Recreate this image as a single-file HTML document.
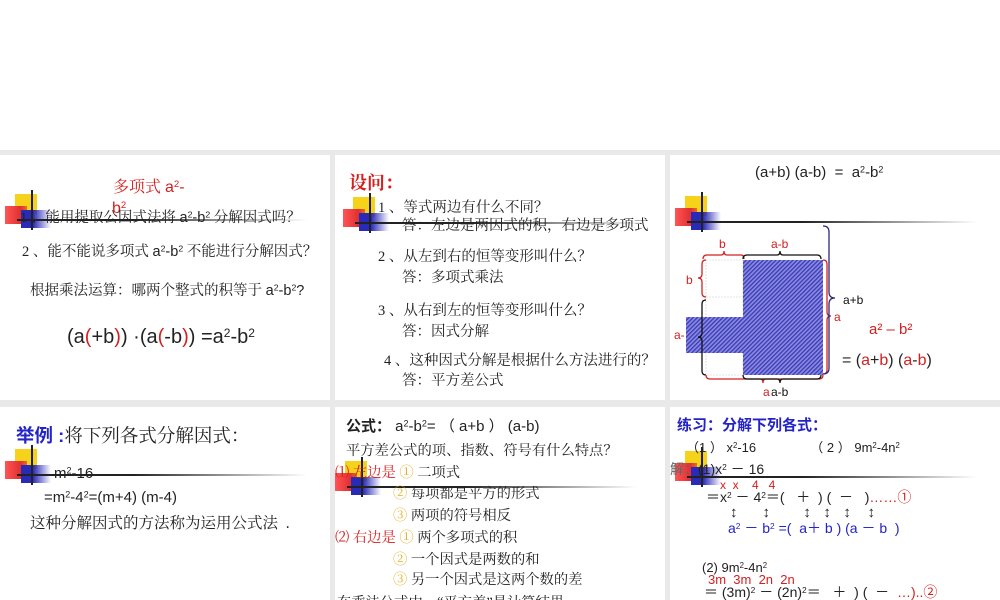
<!DOCTYPE html>
<html><head><meta charset="utf-8"><style>
*{margin:0;padding:0;box-sizing:border-box}
body{width:1000px;height:600px;background:#e9e9e9;position:relative;overflow:hidden;font-family:"Liberation Sans","Noto Sans CJK SC",sans-serif;color:#222}
.top{position:absolute;left:0;top:0;width:1000px;height:150px;background:#fff}
.s{position:absolute;background:#fff;overflow:hidden}
.t{position:absolute;white-space:nowrap;line-height:1}
.cn{font-family:"Liberation Serif","Noto Serif CJK SC",serif}
.r{color:#d42020}.b{color:#2323c8}
sup{font-size:60%;vertical-align:0.5em;line-height:0}
.logo{position:absolute;width:300px;height:40px}
.logo .y{position:absolute;left:10px;top:4px;width:22px;height:20px;background:#f7d21a}
.logo .rd{position:absolute;left:0;top:16px;width:22px;height:18px;background:linear-gradient(90deg,#f55 0%,#e03030 70%,rgba(220,40,40,.6))}
.logo .bl{position:absolute;left:16px;top:20px;width:30px;height:18px;background:linear-gradient(90deg,#2a2ab8 40%,rgba(60,60,200,0))}
.logo .v{position:absolute;left:26px;top:0;width:1.5px;height:40px;background:#222}
.logo .h{position:absolute;left:12px;top:29px;width:290px;height:1.5px;background:linear-gradient(90deg,#222 40%,rgba(0,0,0,0))}
</style></head><body>
<div class="top"></div>

<!-- slide 1 -->
<div class="s" style="left:0;top:155px;width:330px;height:245px">
  <div class="logo" style="left:5px;top:35px"><div class="y"></div><div class="rd"></div><div class="bl"></div><div class="v"></div><div class="h"></div></div>
  <div class="t cn r" style="left:113px;top:25px;font-size:16px">多项式 <span style="font-family:'Liberation Sans'">a<sup>2</sup>-</span></div>
  <div class="t r" style="left:112px;top:46px;font-size:16px">b<sup>2</sup></div>
  <div class="t cn" style="left:20px;top:56px;font-size:14.5px">1 、能用提取公因式法将 <span style="font-family:'Liberation Sans'">a<sup>2</sup>-b<sup>2</sup></span> 分解因式吗？</div>
  <div class="t cn" style="left:22px;top:90px;font-size:14.5px">2 、能不能说多项式 <span style="font-family:'Liberation Sans'">a<sup>2</sup>-b<sup>2</sup></span> 不能进行分解因式？</div>
  <div class="t cn" style="left:30px;top:129px;font-size:14.5px">根据乘法运算：哪两个整式的积等于 <span style="font-family:'Liberation Sans'">a<sup>2</sup>-b<sup>2</sup>?</span></div>
  <div class="t" style="left:67px;top:172px;font-size:20px">(a<span class="r">(</span>+b<span class="r">)</span>) ·(a<span class="r">(</span>-b<span class="r">)</span>) =a<sup>2</sup>-b<sup>2</sup></div>
</div>

<!-- slide 2 -->
<div class="s" style="left:335px;top:155px;width:330px;height:245px">
  <div class="logo" style="left:8px;top:38px"><div class="y"></div><div class="rd"></div><div class="bl"></div><div class="v"></div><div class="h"></div></div>
  <div class="t cn r" style="left:14px;top:19px;font-size:18px;font-weight:bold">设问：</div>
  <div class="t cn" style="left:43px;top:46px;font-size:14.5px">1 、等式两边有什么不同？</div>
  <div class="t cn" style="left:67px;top:64px;font-size:14.5px">答：左边是两因式的积，右边是多项式</div>
  <div class="t cn" style="left:43px;top:95px;font-size:14.5px">2 、从左到右的恒等变形叫什么？</div>
  <div class="t cn" style="left:67px;top:116px;font-size:14.5px">答：多项式乘法</div>
  <div class="t cn" style="left:43px;top:149px;font-size:14.5px">3 、从右到左的恒等变形叫什么？</div>
  <div class="t cn" style="left:67px;top:170px;font-size:14.5px">答：因式分解</div>
  <div class="t cn" style="left:49px;top:199px;font-size:14.5px">4 、这种因式分解是根据什么方法进行的？</div>
  <div class="t cn" style="left:67px;top:219px;font-size:14.5px">答：平方差公式</div>
</div>

<!-- slide 3 -->
<div class="s" style="left:670px;top:155px;width:330px;height:245px">
  <div class="logo" style="left:5px;top:37px"><div class="y"></div><div class="rd"></div><div class="bl"></div><div class="v"></div><div class="h"></div></div>
  <div class="t" style="left:85px;top:10px;font-size:15px">(a+b) (a-b) &nbsp;= &nbsp;a<sup>2</sup>-b<sup>2</sup></div>
</div>
<svg style="position:absolute;left:670px;top:155px" width="330" height="245" viewBox="670 155 330 245">
  <defs><pattern id="hp" width="3" height="3" patternUnits="userSpaceOnUse" patternTransform="rotate(45)"><rect width="3" height="3" fill="#8a8ae0"/><rect width="1.3" height="3" fill="#3a3ab8"/></pattern></defs>
  <rect x="706" y="260" width="37" height="115" fill="none" stroke="#ccc" stroke-width="0.6" stroke-dasharray="2 1"/>
  <line x1="706" y1="297" x2="743" y2="297" stroke="#ccc" stroke-width="0.6" stroke-dasharray="2 1"/>
  <rect x="743" y="260" width="80" height="115" fill="url(#hp)"/>
  <rect x="686" y="317" width="79" height="36" fill="url(#hp)"/>
  <g fill="none" stroke-width="1.3">
    <path d="M703 259 q0-4 4-4 h14 q3 0 3-4 q0 4 3 4 h14 q3 0 3 4" stroke="#d42020"/>
    <path d="M743 259 q0-4 4-4 h30 q3 0 3-4 q0 4 3 4 h34 q4 0 4 4" stroke="#111"/>
    <path d="M706 260 q-4 0-4 4 v10 q0 4-4 4 q4 0 4 4 v11 q0 4 4 4" stroke="#d42020"/>
    <path d="M706 300 q-4 0-4 4 v29 q0 4-4 4 q4 0 4 4 v30 q0 4 4 4" stroke="#111"/>
    <path d="M823 260 q4 0 4 4 v48 q0 4 4 4 q-4 0-4 4 v50 q0 4-4 4" stroke="#d42020"/>
    <path d="M823 226 q6 0 6 6 v60 q0 6 6 6 q-6 0-6 6 v64 q0 6-6 6" stroke="#2a2a7a"/>
    <path d="M706 375 q0 4 4 4 h50 q3 0 3 4 q0-4 3-4 h53 q4 0 4-4" stroke="#d42020"/>
    <path d="M743 375 q0 4 4 4 h30 q3 0 3 4 q0-4 3-4 h34 q4 0 4-4" stroke="#111"/>
  </g>
  <g font-family="Liberation Sans" font-size="12">
    <text x="719" y="248" fill="#d42020">b</text>
    <text x="771" y="248" fill="#d42020">a-b</text>
    <text x="686" y="284" fill="#d42020">b</text>
    <text x="843" y="304" fill="#111">a+b</text>
    <text x="834" y="321" fill="#d42020">a</text>
    <text x="674" y="339" fill="#d42020">a-</text>
    <text x="763" y="396" fill="#d42020">a</text>
    <text x="771" y="396" fill="#111">a-b</text>
  </g>
  <text x="869" y="334" font-family="Liberation Sans" font-size="15" fill="#d42020">a² – b²</text>
  <text x="842" y="365" font-family="Liberation Sans" font-size="16" fill="#222">= (<tspan fill="#d42020">a</tspan>+<tspan fill="#d42020">b</tspan>) (<tspan fill="#d42020">a</tspan>-<tspan fill="#d42020">b</tspan>)</text>
</svg>

<!-- slide 4 -->
<div class="s" style="left:0;top:407px;width:330px;height:193px">
  <div class="logo" style="left:5px;top:38px"><div class="y"></div><div class="rd"></div><div class="bl"></div><div class="v"></div><div class="h"></div></div>
  <div class="t cn" style="left:16px;top:20px;font-size:18.5px"><b class="b" style="font-family:'Liberation Sans','Noto Sans CJK SC'">举例 :</b>将下列各式分解因式：</div>
  <div class="t" style="left:54px;top:59px;font-size:15px">m<sup>2</sup>-16</div>
  <div class="t" style="left:44px;top:83px;font-size:15px">=m<sup>2</sup>-4<sup>2</sup>=(m+4) (m-4)</div>
  <div class="t cn" style="left:30px;top:109px;font-size:15.5px">这种分解因式的方法称为运用公式法 &nbsp;.</div>
</div>

<!-- slide 5 -->
<div class="s" style="left:335px;top:407px;width:330px;height:193px">
  <div class="logo" style="left:0;top:50px"><div class="y"></div><div class="rd"></div><div class="bl"></div><div class="v"></div><div class="h"></div></div>
  <div class="t" style="left:11px;top:12px;font-size:15px"><b class="cn" style="font-family:'Liberation Sans','Noto Sans CJK SC'">公式：</b> a<sup>2</sup>-b<sup>2</sup>= （ a+b ） (a-b)</div>
  <div class="t cn" style="left:11px;top:37px;font-size:14.3px">平方差公式的项、指数、符号有什么特点？</div>
  <div class="t cn" style="left:0;top:59px;font-size:14.3px"><span class="r">⑴ 左边是</span> <span style="color:#e0b020">①</span> 二项式</div>
  <div class="t cn" style="left:58px;top:80px;font-size:14.3px"><span style="color:#e0b020">②</span> 每项都是平方的形式</div>
  <div class="t cn" style="left:58px;top:102px;font-size:14.3px"><span style="color:#e0b020">③</span> 两项的符号相反</div>
  <div class="t cn" style="left:0;top:124px;font-size:14.3px"><span class="r">⑵ 右边是</span> <span style="color:#e0b020">①</span> 两个多项式的积</div>
  <div class="t cn" style="left:58px;top:146px;font-size:14.3px"><span style="color:#e0b020">②</span> 一个因式是两数的和</div>
  <div class="t cn" style="left:58px;top:166px;font-size:14.3px"><span style="color:#e0b020">③</span> 另一个因式是这两个数的差</div>
  <div class="t cn" style="left:2px;top:189px;font-size:14.3px">在乘法公式中，“平方差”是计算结果</div>
</div>

<!-- slide 6 -->
<div class="s" style="left:670px;top:407px;width:330px;height:193px">
  <div class="logo" style="left:5px;top:40px"><div class="y"></div><div class="rd"></div><div class="bl"></div><div class="v"></div><div class="h"></div></div>
  <div class="t b" style="left:7px;top:11px;font-size:15px;font-weight:bold;font-family:'Liberation Sans','Noto Sans CJK SC',sans-serif">练习：分解下列各式：</div>
  <div class="t" style="left:16px;top:34px;font-size:13px">（1 ） x<sup>2</sup>-16 &nbsp;&nbsp;&nbsp;&nbsp;&nbsp;&nbsp;&nbsp;&nbsp;&nbsp;&nbsp;&nbsp;&nbsp;&nbsp;&nbsp;（ 2 ） 9m<sup>2</sup>-4n<sup>2</sup></div>
  <div class="t" style="left:0;top:55px;font-size:14px"><span style="color:#666">解：</span>(1)x<sup>2</sup> － 16</div>
  <div class="t r" style="left:50px;top:72px;font-size:12px">x &nbsp;x &nbsp;&nbsp;&nbsp;4 &nbsp;&nbsp;4</div>
  <div class="t" style="left:36px;top:83px;font-size:14px">＝x<sup>2</sup> － 4<sup>2</sup>＝( &nbsp;&nbsp;＋ &nbsp;) ( &nbsp;－ &nbsp;&nbsp;)<span class="r">……①</span></div>
  <div class="t" style="left:60px;top:98px;font-size:15px">↕ &nbsp;&nbsp;&nbsp;&nbsp;&nbsp;↕ &nbsp;&nbsp;&nbsp;&nbsp;&nbsp;&nbsp;&nbsp;↕ &nbsp;&nbsp;↕ &nbsp;&nbsp;↕ &nbsp;&nbsp;&nbsp;↕</div>
  <div class="t b" style="left:58px;top:114px;font-size:14px">a<sup>2</sup> － b<sup>2</sup> =( &nbsp;a＋ b ) (a － b &nbsp;)</div>
  <div class="t" style="left:32px;top:154px;font-size:13px">(2) 9m<sup>2</sup>-4n<sup>2</sup></div>
  <div class="t r" style="left:38px;top:166px;font-size:13px">3m &nbsp;3m &nbsp;2n &nbsp;2n</div>
  <div class="t" style="left:34px;top:178px;font-size:14px">＝ (3m)<sup>2</sup> － (2n)<sup>2</sup>＝ &nbsp;&nbsp;＋ &nbsp;) ( &nbsp;－ &nbsp;<span class="r">…)..②</span></div>
</div>
</body></html>
